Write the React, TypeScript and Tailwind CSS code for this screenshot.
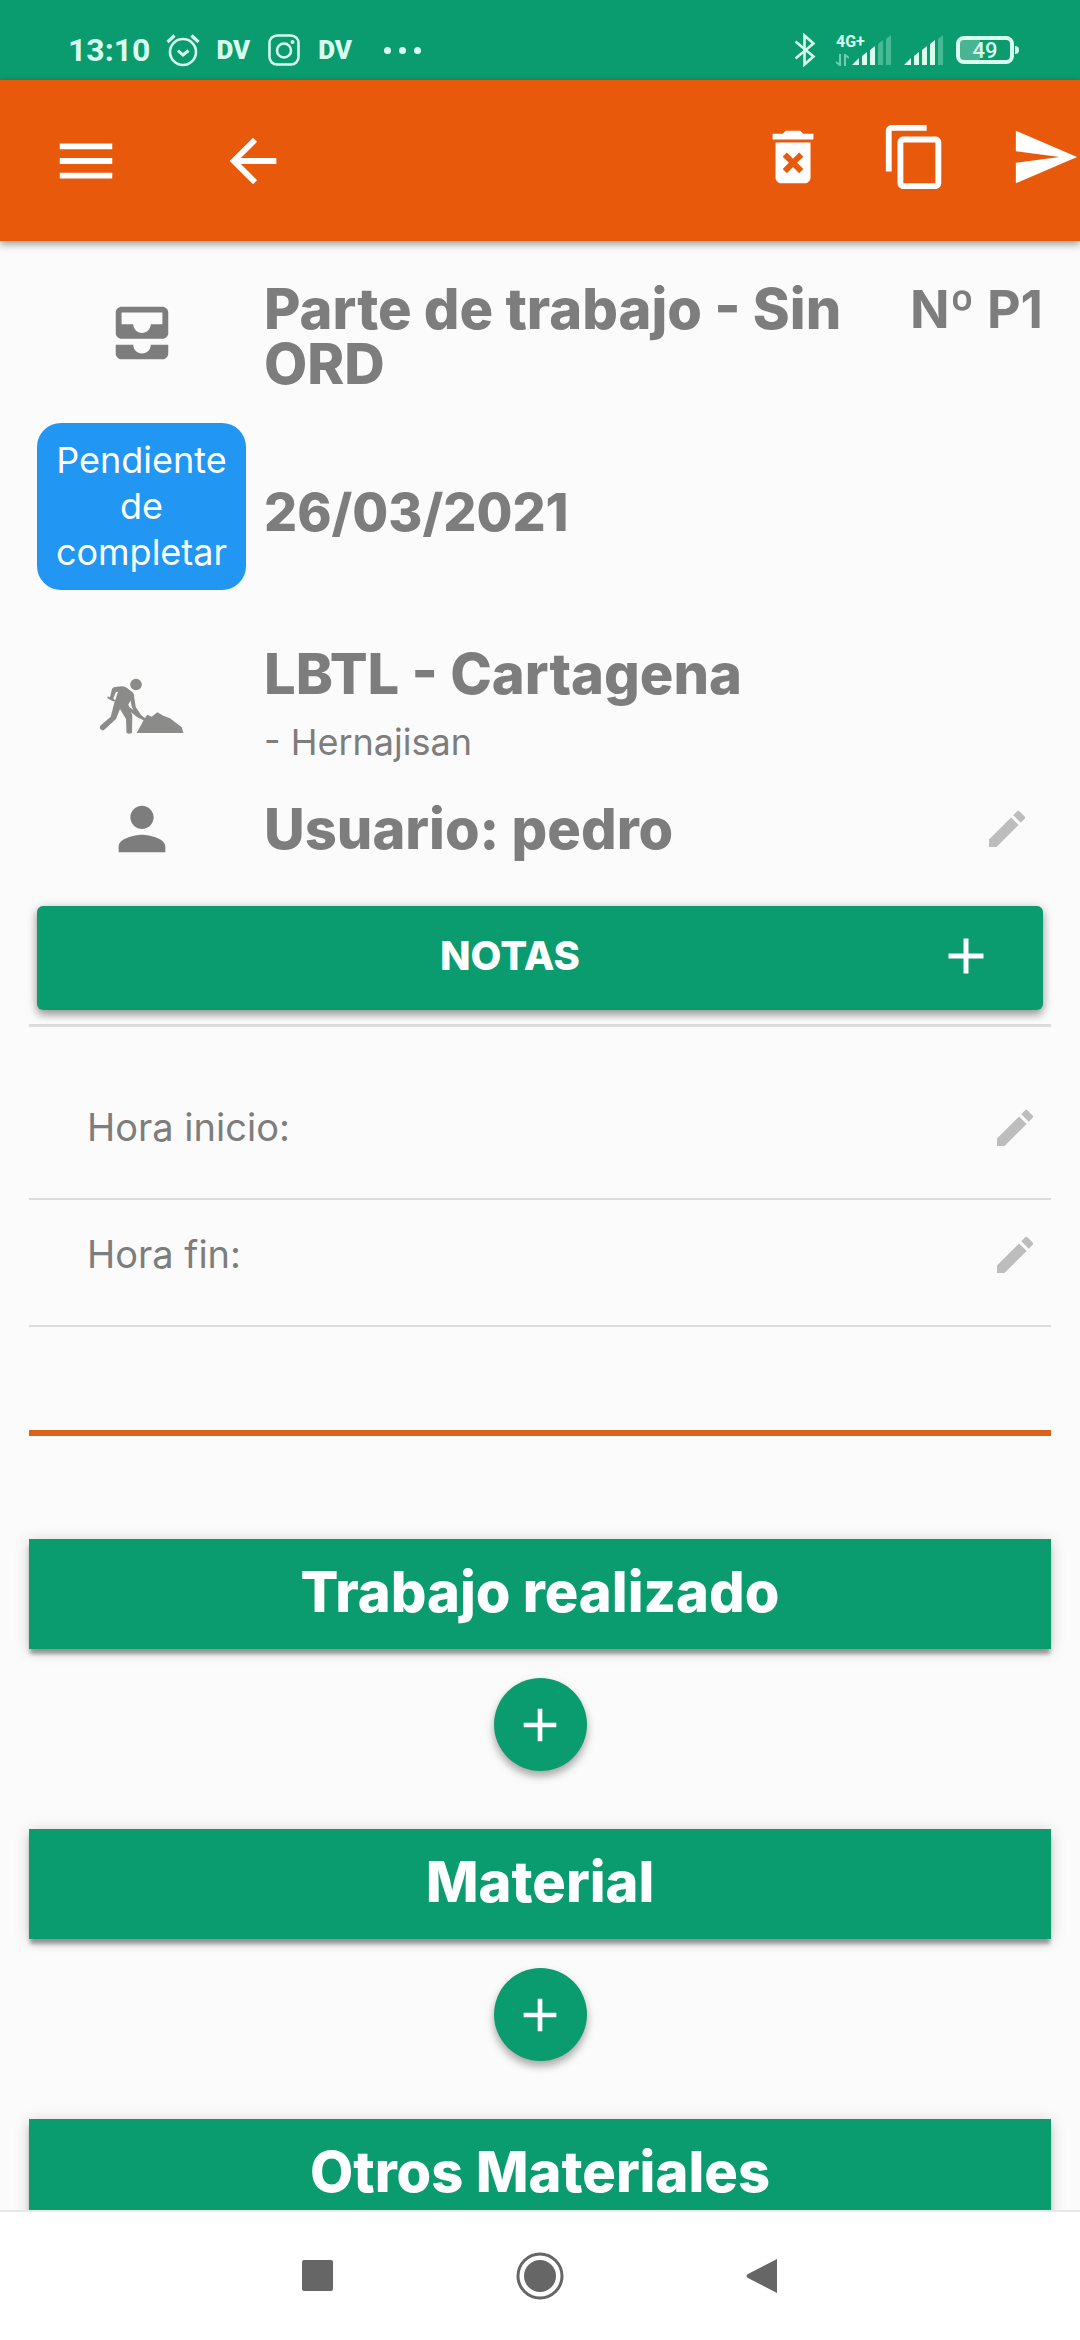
import React from "react";

import {
  MdAdd,
  MdAllInbox,
  MdArrowBack,
  MdContentCopy,
  MdDeleteForever,
  MdEdit,
  MdMenu,
  MdPerson,
  MdSend,
} from "react-icons/md";

const AlarmIcon = () => (
  <svg viewBox="0 0 34 34" className="w-[34px] h-[34px]" fill="none" stroke="currentColor">
    <circle cx="17" cy="19" r="13" strokeWidth="2.6" />
    <path d="M12 17.5l5 4.5 5.500-4.500" strokeWidth="3" />
    <path d="M1.500 9l7-6.500M32.500 9l-7-6.500" strokeWidth="3.200" />
  </svg>
);

const InstagramIcon = () => (
  <svg viewBox="0 0 32 32" className="w-8 h-8" fill="none" stroke="currentColor">
    <rect x="1.500" y="1.500" width="29" height="29" rx="7.500" strokeWidth="2.600" />
    <circle cx="16" cy="16.500" r="7" strokeWidth="2.600" />
    <circle cx="24.500" cy="8" r="2" fill="currentColor" stroke="none" />
  </svg>
);

const BluetoothIcon = () => (
  <svg viewBox="0 0 22 34" className="w-[22px] h-[34px]" fill="none" stroke="currentColor">
    <path d="M1.500 8.500l18 15-9 8v-29l9 8-18 15" strokeWidth="2.600" />
  </svg>
);

const SignalIcon = ({ level }: { level: number }) => (
  <svg viewBox="0 0 40 30" className="w-10 h-[30px]" fill="currentColor">
    {["M0 30l7-7v7z", "M10 21l5-4v13h-5z", "M18 15l5-4v19h-5z", "M26 9l5-4v25h-5z", "M34 4l5-4v30h-5z"].map(
      (d, i) => (
        <path key={d} d={d} opacity={i < level ? 1 : 0.3} />
      )
    )}
  </svg>
);

const DataArrowsIcon = () => (
  <svg viewBox="0 0 13 12" className="w-[13px] h-3 opacity-50" fill="none" stroke="currentColor">
    <path d="M0 8l4 3V0M13 4L9 1v11" strokeWidth="2" />
  </svg>
);

const WorkerIcon = () => (
  <svg viewBox="0 0 85 56" className="w-[85px] h-14" fill="#8b8b8a">
    <circle cx="37" cy="6.500" r="5.800" />
    <path d="M16 9l7-.7c3 0 5 1.500 7 3.400 3 1.500 5 3 5 6l1.700 11.300 6 9-5 .5-5-10-1.200-6-2.200 4 4 11-.3 17c0 1.500-5.500 1.500-5.500 0l-.5-13.500-6-10-4 10L5 52c-2 1.200-5-1-4-4l10.700-9.300L15 26l2.700-8.300 1.300-4-2 .3-2.700 6.300 3.200 4-4-1.300-5.200-2.700.3-1.800 2.400.8 1.700-7.300c.4-1.600 1.600-3 3.300-3z" />
    <path d="M28 27.500l18 12.500v3l-8-4-10-8z" />
    <path d="M37.700 55l7.600-14 3-4.300 4.400 2 5.600-4.400 6 3.400 6.700 2.600 11.700 9 1.800 5.700z" />
  </svg>
);

const StatusBar = () => (
  <div className="bg-[#0a9b6e] text-[#d8ffee] font-[Roboto,sans-serif] h-20 shrink-0 flex justify-between pt-5 pl-[68px] pr-[61px]">
    <div className="flex items-center">
      <span className="text-[32px] font-bold">13:10</span>
      <span className="ml-4">
        <AlarmIcon />
      </span>
      <span className="ml-4 text-[26px] font-black">DV</span>
      <span className="mx-[18px]">
        <InstagramIcon />
      </span>
      <span className="text-[26px] font-black">DV</span>
      <div className="ml-8 flex gap-2">
        <i className="w-[7px] h-[7px] rounded-full bg-current" />
        <i className="w-[7px] h-[7px] rounded-full bg-current" />
        <i className="w-[7px] h-[7px] rounded-full bg-current" />
      </div>
    </div>
    <div className="flex items-center">
      <BluetoothIcon />
      <div className="ml-5 flex flex-col gap-1 w-4">
        <span className="text-base leading-4 font-bold">4G+</span>
        <DataArrowsIcon />
      </div>
      <SignalIcon level={3} />
      <span className="ml-3">
        <SignalIcon level={4} />
      </span>
      <div className="ml-3 w-[58px] h-7 rounded-lg border-4 border-current flex items-center justify-center text-[22px] font-medium bg-linear-to-r from-white/25 from-40% to-transparent to-40%">
        49
      </div>
      <i className="ml-px w-1 h-2 rounded-r bg-current" />
    </div>
  </div>
);

const Header = () => (
  <header className="relative z-10 bg-[#e9590c] text-white h-[161px] shrink-0 flex items-center justify-between pl-[51px] shadow-[0_3px_8px_rgba(0,0,0,0.4)]">
    <div className="flex gap-[97px]">
      <button aria-label="Menú">
        <MdMenu className="size-[70px]" />
      </button>
      <button aria-label="Volver">
        <MdArrowBack className="size-[70px]" />
      </button>
    </div>
    <div className="flex pb-2">
      <button aria-label="Eliminar">
        <MdDeleteForever className="size-[70px]" />
      </button>
      <button aria-label="Duplicar" className="ml-[52px]">
        <MdContentCopy className="size-[70px]" />
      </button>
      <button aria-label="Enviar" className="ml-[60px]">
        <MdSend className="size-[70px]" />
      </button>
    </div>
  </header>
);

const EditButton = ({ label }: { label: string }) => (
  <button aria-label={label} className="text-[#bdbdbd]">
    <MdEdit className="size-12" />
  </button>
);

const TimeRow = ({ label }: { label: string }) => (
  <div className="h-[127px] pl-[58px] pr-3 pb-4 border-b-2 border-[#dcdcdc] flex items-center justify-between">
    <span className="text-[38px]">{label}</span>
    <EditButton label={`Editar ${label}`} />
  </div>
);

const Section = ({ title }: { title: string }) => (
  <section className="flex flex-col items-center mb-[58px]">
    <h2 className="w-full h-[110px] pb-1 bg-[#0a9b6e] text-white text-[56px] font-extrabold flex items-center justify-center shadow-[0_6px_4px_-1px_rgba(0,0,0,0.35),0_2px_14px_rgba(0,0,0,0.18)]">
      {title}
    </h2>
    <button
      aria-label={`Añadir ${title}`}
      className="mt-[29px] size-[93px] rounded-full bg-[#0a9b6e] text-white flex items-center justify-center shadow-[0_5px_8px_rgba(0,0,0,0.35)]"
    >
      <MdAdd className="size-14" />
    </button>
  </section>
);

const BottomNav = () => (
  <nav className="h-[130px] shrink-0 bg-white border-t-2 border-[#e8e8e8] text-[#666] flex justify-center items-center gap-[182px]">
    <button aria-label="Recientes">
      <svg viewBox="0 0 32 32" className="size-8" fill="currentColor">
        <rect width="31" height="31" rx="2" />
      </svg>
    </button>
    <button aria-label="Inicio">
      <svg viewBox="0 0 48 48" className="size-12" fill="currentColor">
        <circle cx="24" cy="24" r="22" fill="none" stroke="currentColor" strokeWidth="3" />
        <circle cx="24" cy="24" r="16" />
      </svg>
    </button>
    <button aria-label="Atrás">
      <svg viewBox="0 0 32 36" className="w-8 h-9" fill="currentColor">
        <path d="M31 1v34L2 20c-2-1-2-3 0-4z" />
      </svg>
    </button>
  </nav>
);

const App = () => {
  return (
    <div className="h-screen flex flex-col bg-[#fbfbfb] text-[#7d7d7d] font-[Inter,sans-serif]">
      <StatusBar />
      <Header />
      <main className="flex-1 min-h-0 overflow-hidden px-[29px] pt-[41px]">
        <div className="px-2">
          <div className="grid grid-cols-[209px_1fr_auto] gap-x-[18px]">
            <div className="flex items-center justify-center pb-2">
              <MdAllInbox className="size-[70px]" />
            </div>
            <h1 className="text-[56px] leading-[55px] font-extrabold">Parte de trabajo - Sin ORD</h1>
            <span className="text-[52px] leading-[55px] font-bold">Nº P1</span>
          </div>
          <div className="mt-[31px] grid grid-cols-[209px_1fr] gap-x-[18px] items-center">
            <div className="rounded-3xl bg-[#2196f3] text-white text-4xl leading-[46px] text-center px-3 pt-[14px] pb-[15px]">
              Pendiente de completar
            </div>
            <span className="pt-3 text-[52px] leading-[55px] font-extrabold">26/03/2021</span>
          </div>
          <div className="mt-[57px] grid grid-cols-[209px_1fr] gap-x-[18px] items-center">
            <div className="flex justify-center">
              <WorkerIcon />
            </div>
            <div>
              <h2 className="text-[56px] leading-[55px] font-extrabold">LBTL - Cartagena</h2>
              <p className="mt-[18px] text-4xl leading-[44px]">- Hernajisan</p>
            </div>
          </div>
          <div className="mt-[30px] grid grid-cols-[209px_1fr_auto] gap-x-[18px] items-center pr-3">
            <MdPerson className="size-[70px] justify-self-center" />
            <span className="text-[56px] leading-[55px] font-extrabold">Usuario: pedro</span>
            <EditButton label="Editar usuario" />
          </div>
          <button className="mt-[42px] w-full h-[104px] rounded-md bg-[#0a9b6e] text-white flex items-center px-[47px] pb-1 shadow-[0_5px_8px_rgba(0,0,0,0.35),0_0_12px_rgba(0,0,0,0.12)]">
            <span className="flex-1 text-[40px] font-extrabold">NOTAS</span>
            <MdAdd className="size-[60px]" />
          </button>
        </div>
        <hr className="mt-[14px] border-t-[3px] border-[#dcdcdc]" />
        <div className="mt-[46px]">
          <TimeRow label="Hora inicio:" />
          <TimeRow label="Hora fin:" />
        </div>
        <hr className="my-[103px] border-t-[6px] border-[#dc6119]" />
        <Section title="Trabajo realizado" />
        <Section title="Material" />
        <Section title="Otros Materiales" />
      </main>
      <BottomNav />
    </div>
  );
};

export default App;
